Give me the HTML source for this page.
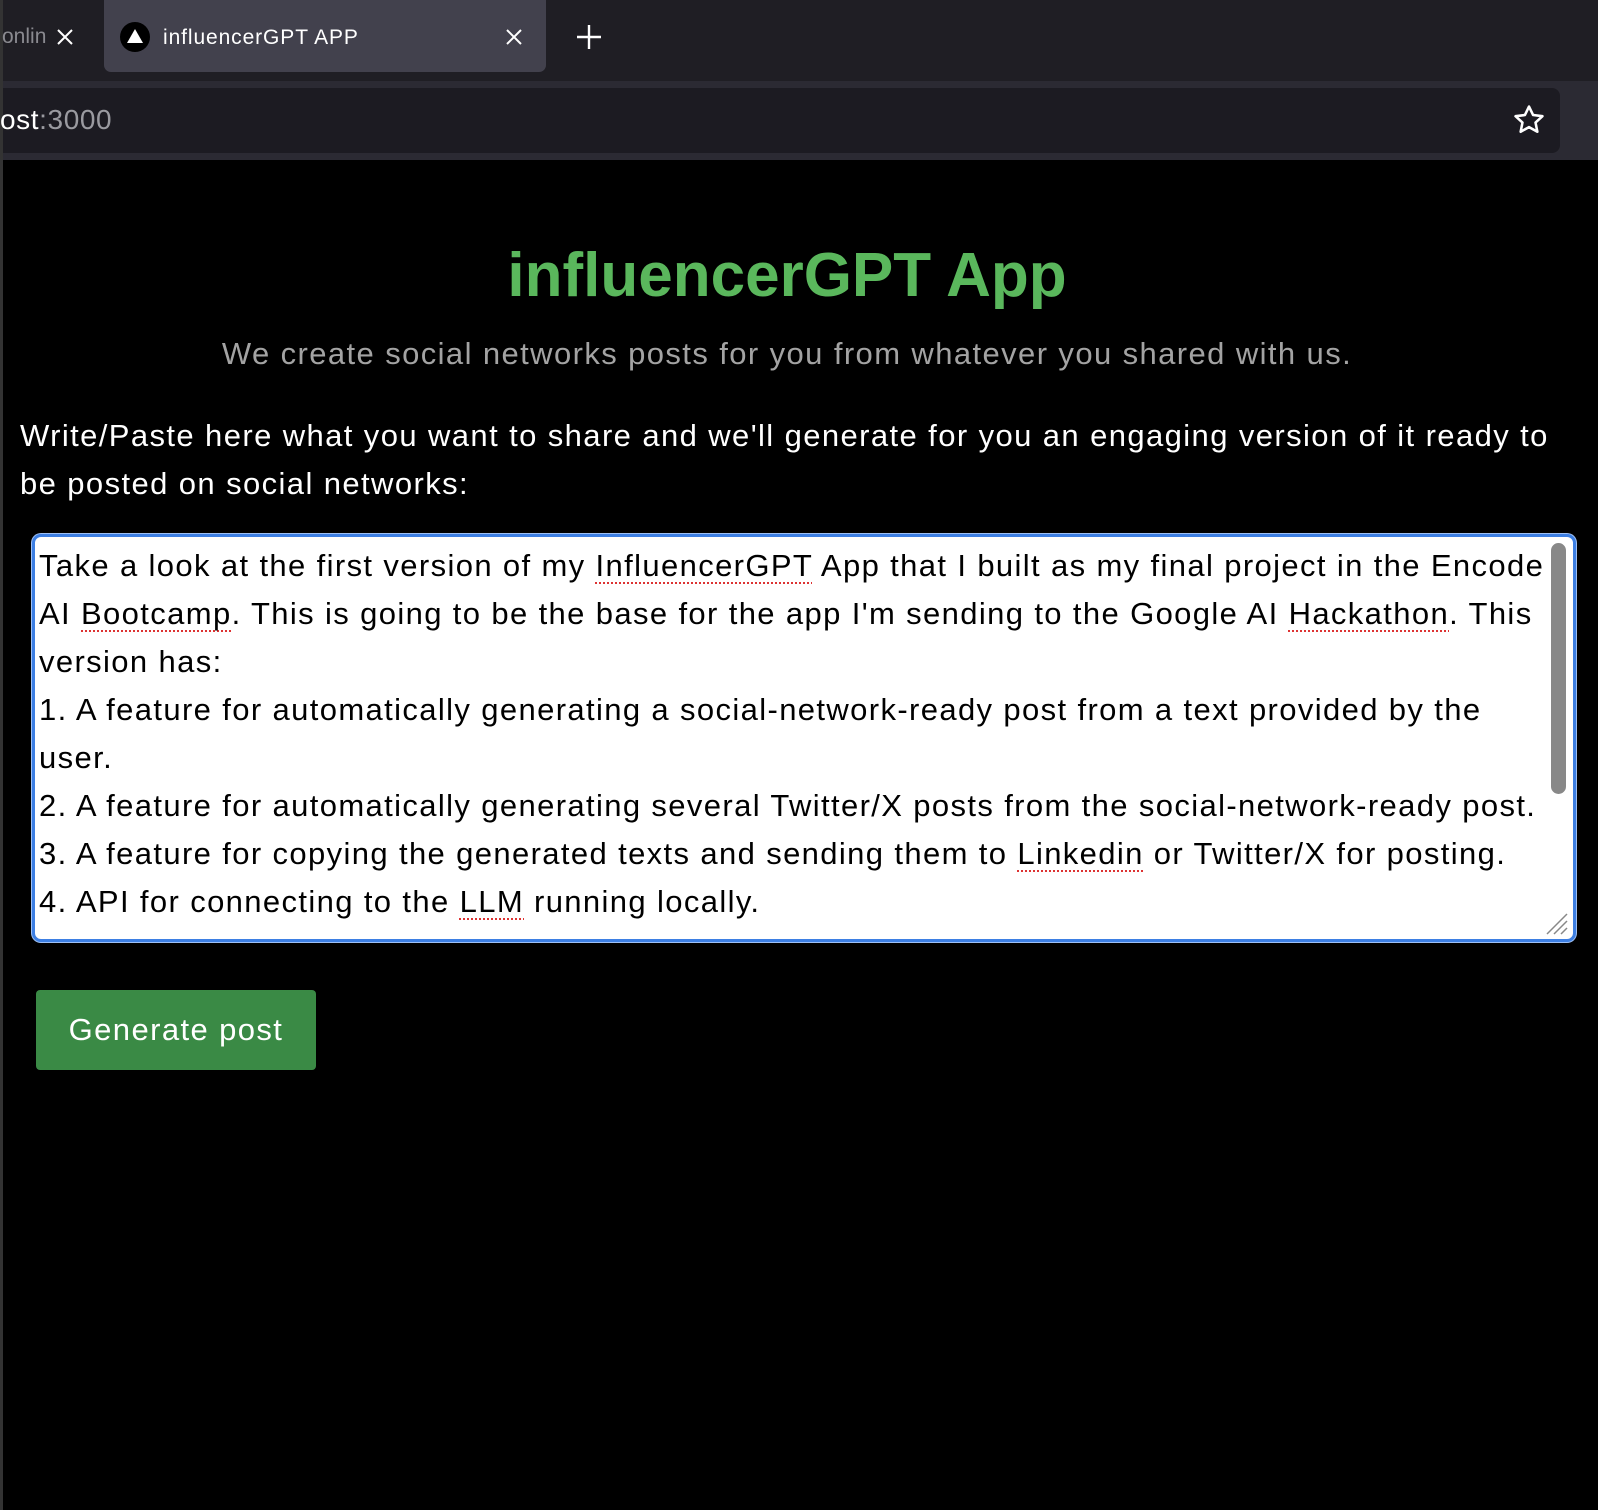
<!DOCTYPE html>
<html><head><meta charset="utf-8"><style>
*{margin:0;padding:0;box-sizing:border-box}
body{width:1598px;height:1510px;background:#000;font-family:"Liberation Sans",sans-serif;position:relative;overflow:hidden}
.abs{position:absolute}
.sp{text-decoration:underline dotted #d33;text-underline-offset:6px;text-decoration-thickness:2px}
</style></head><body>
<div class="abs" style="left:0;top:0;width:1598px;height:81px;background:#1f1e24"></div>
<div class="abs" style="left:0;top:81px;width:1598px;height:79px;background:#2b2a33"></div>
<div class="abs" style="left:0;top:88px;width:1560px;height:65px;background:#1c1b22;border-radius:0 8px 8px 0"></div>
<div class="abs" style="left:0;top:0;width:3px;height:1510px;background:#333"></div>
<div class="abs" style="left:2px;top:25px;font-size:21px;color:#8a8a90">onlin</div>
<svg class="abs" style="left:55px;top:27px" width="20" height="20"><path d="M3 3L17 17M17 3L3 17" stroke="#fff" stroke-width="2"/></svg>
<div class="abs" style="left:104px;top:0;width:442px;height:72px;background:#42414d;border-radius:0 0 7px 7px"></div>
<div class="abs" style="left:120px;top:22px;width:30px;height:30px;border-radius:50%;background:#000"></div>
<svg class="abs" style="left:120px;top:22px" width="30" height="30"><polygon points="15,7 23,21 7,21" fill="#fff"/></svg>
<div class="abs" style="left:163px;top:26px;font-size:21px;color:#fff;letter-spacing:0.9px">influencerGPT APP</div>
<svg class="abs" style="left:504px;top:27px" width="20" height="20"><path d="M3 3L17 17M17 3L3 17" stroke="#fff" stroke-width="2"/></svg>
<svg class="abs" style="left:576px;top:24px" width="26" height="26"><path d="M13 1V25M1 13H25" stroke="#fff" stroke-width="2.4"/></svg>
<div class="abs" style="left:0;top:104px;font-size:28px;color:#fff;letter-spacing:0.6px">ost<span style="color:#9a9aa0">:3000</span></div>
<svg class="abs" style="left:1512px;top:103px" width="34" height="34" viewBox="0 0 24 24"><path d="M12 2.5l2.9 6 6.6.8-4.9 4.5 1.3 6.5L12 17l-5.9 3.3 1.3-6.5L2.5 9.3l6.6-.8z" fill="none" stroke="#fff" stroke-width="1.8" stroke-linejoin="round"/></svg>
<div class="abs" style="left:0;top:240px;width:1598px;text-align:center"><span style="display:inline-block;margin-left:-24px;font-size:62px;font-weight:bold;color:#5ab75c">influencerGPT App</span></div>
<div class="abs" style="left:0;top:336px;width:1598px;text-align:center"><span style="display:inline-block;margin-left:-24px;font-size:31px;color:#a3a3a3;letter-spacing:1.4px">We create social networks posts for you from whatever you shared with us.</span></div>
<div class="abs" style="left:20px;top:412px;width:1560px;font-size:31px;line-height:48px;color:#fff;letter-spacing:1.4px;white-space:nowrap">Write/Paste here what you want to share and we'll generate for you an engaging version of it ready to<br>be posted on social networks:</div>
<div class="abs" style="left:32px;top:534px;width:1544px;height:408px;background:#fff;border:3px solid #3d7fe3;border-radius:9px;box-shadow:0 0 0 1px #9ec0f5"></div>
<div class="abs" style="left:39px;top:542px;width:1520px;font-size:31px;line-height:48px;color:#000;white-space:nowrap;letter-spacing:1.37px">
Take a look at the first version of my <span class="sp">InfluencerGPT</span> App that I built as my final project in the Encode<br>
AI <span class="sp">Bootcamp</span>. This is going to be the base for the app I'm sending to the Google AI <span class="sp">Hackathon</span>. This<br>
version has:<br>
1. A feature for automatically generating a social-network-ready post from a text provided by the<br>
user.<br>
2. A feature for automatically generating several Twitter/X posts from the social-network-ready post.<br>
3. A feature for copying the generated texts and sending them to <span class="sp">Linkedin</span> or Twitter/X for posting.<br>
4. API for connecting to the <span class="sp">LLM</span> running locally.</div>
<div class="abs" style="left:1551px;top:543px;width:15px;height:251px;background:#888;border-radius:8px"></div>
<svg class="abs" style="left:1543px;top:910px" width="26" height="26"><path d="M24 4L4 24M24 11L11 24M24 18L18 24" stroke="#888" stroke-width="1.5"/></svg>
<div class="abs" style="left:36px;top:990px;width:280px;height:80px;background:#3a8a45;border-radius:4px;color:#fff;font-size:31px;line-height:80px;text-align:center;letter-spacing:1.4px">Generate post</div>
</body></html>
